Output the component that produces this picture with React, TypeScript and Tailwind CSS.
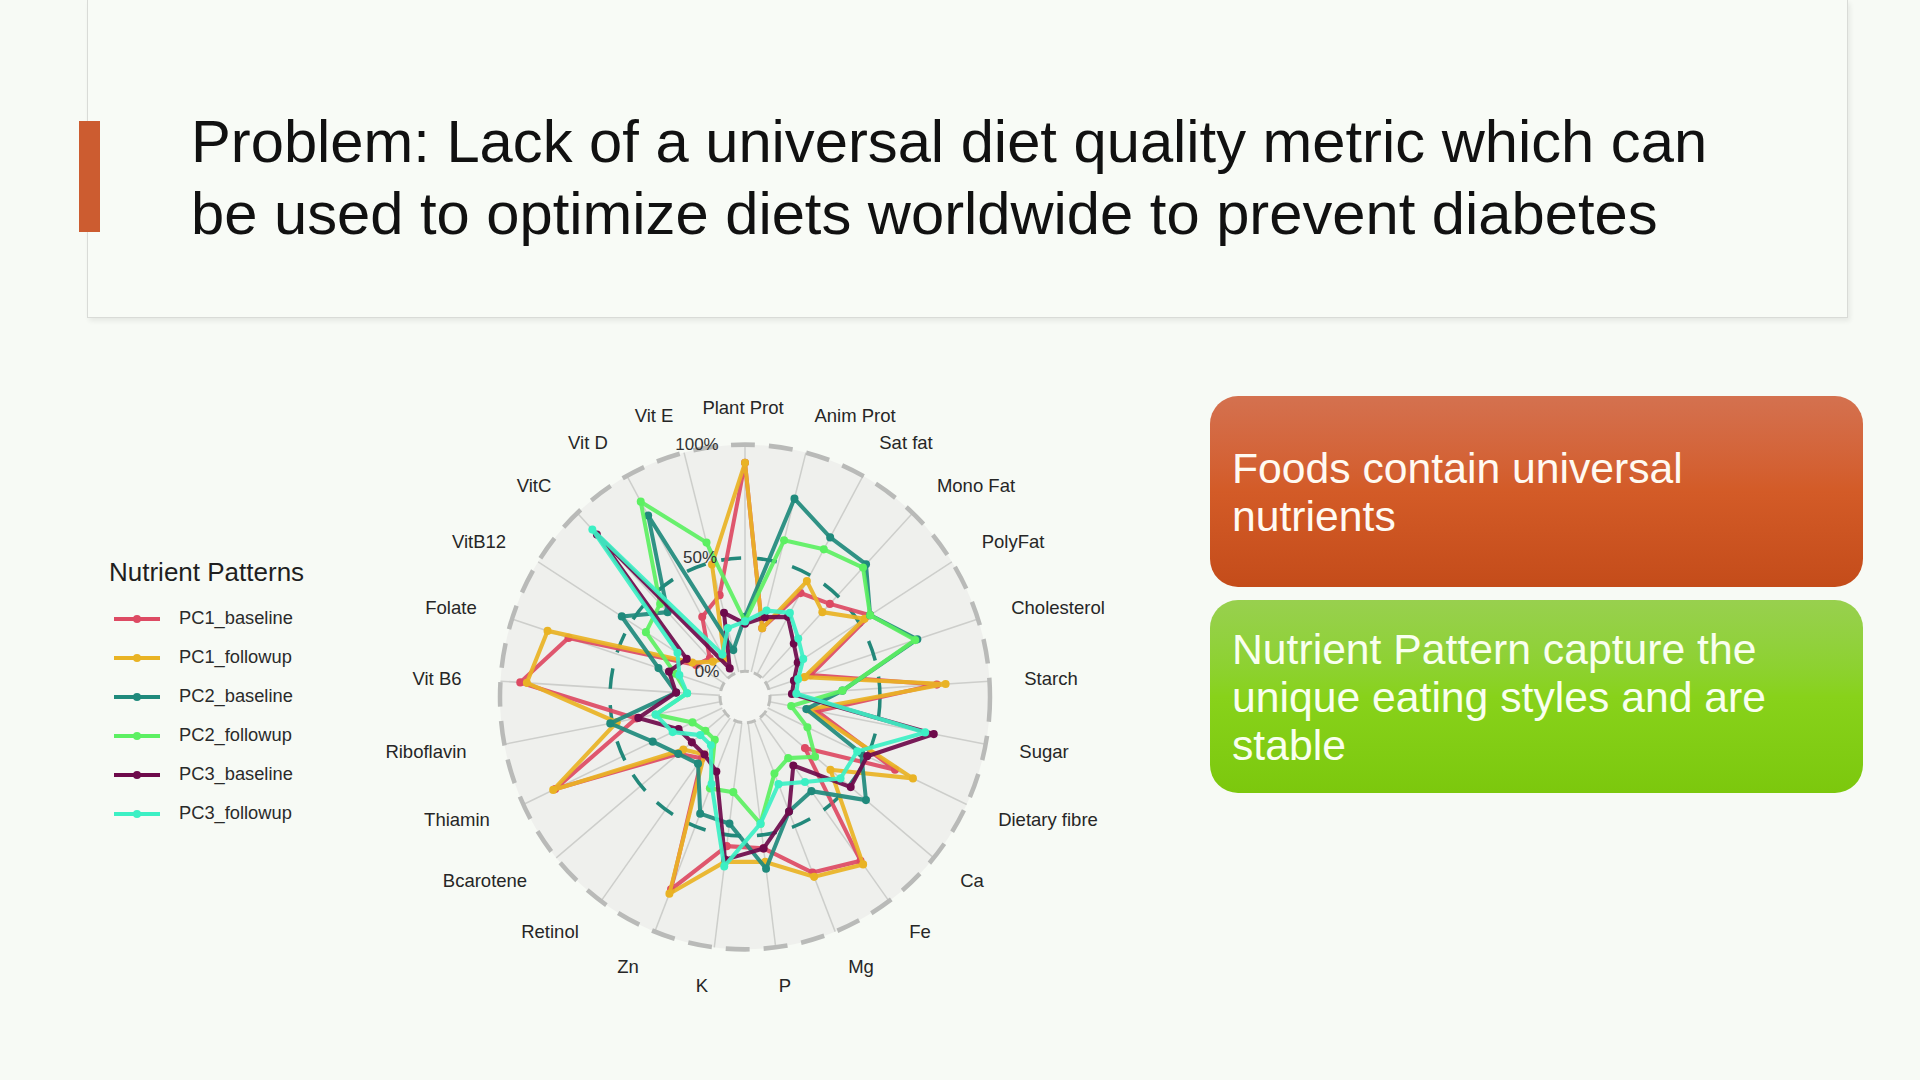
import React from 'react'

const AXES = [
    'Plant Prot', 'Anim Prot', 'Sat fat', 'Mono Fat', 'PolyFat', 'Cholesterol', 'Starch', 'Sugar',
    'Dietary fibre', 'Ca', 'Fe', 'Mg', 'P', 'K', 'Zn', 'Retinol', 'Bcarotene', 'Thiamin',
    'Riboflavin', 'Vit B6', 'Folate', 'VitB12', 'VitC', 'Vit D', 'Vit E',
]

// label centres inside the chart svg
const LABEL_POS: [number, number][] = [
    [363, 27], [475, 35], [526, 62], [596, 105], [633, 161], [678, 227], [671, 298], [664, 371],
    [668, 439], [592, 500], [540, 551], [481, 586], [405, 605], [322, 605], [248, 586], [170, 551],
    [105, 500], [77, 439], [46, 371], [57, 298], [71, 227], [99, 161], [154, 105], [208, 62], [274, 35],
]

const SERIES = [
    { name: 'PC1_baseline', color: '#dd4a63', values: [0.92, 0.2, 0.41, 0.45, 0.56, 0.2, 0.76, 0.22, 0.64, 0.24, 0.78, 0.72, 0.56, 0.55, 0.8, 0.22, 0.28, 0.84, 0.39, 0.91, 0.73, 0.15, 0.12, 0.29, 0.35] },
    { name: 'PC1_followup', color: '#e9b324', values: [0.92, 0.2, 0.47, 0.4, 0.53, 0.17, 0.8, 0.18, 0.73, 0.39, 0.8, 0.74, 0.62, 0.62, 0.82, 0.2, 0.25, 0.85, 0.48, 0.88, 0.83, 0.17, 0.1, 0.08, 0.49] },
    { name: 'PC2_baseline', color: '#1f8a7c', values: [0.24, 0.79, 0.69, 0.69, 0.56, 0.71, 0.33, 0.17, 0.47, 0.6, 0.4, 0.43, 0.65, 0.45, 0.44, 0.25, 0.28, 0.35, 0.51, 0.2, 0.3, 0.55, 0.4, 0.8, 0.1] },
    { name: 'PC2_followup', color: '#5cf062', values: [0.22, 0.6, 0.63, 0.67, 0.56, 0.7, 0.33, 0.1, 0.2, 0.3, 0.22, 0.25, 0.45, 0.31, 0.32, 0.12, 0.12, 0.15, 0.3, 0.15, 0.22, 0.42, 0.45, 0.87, 0.59] },
    { name: 'PC3_baseline', color: '#6e0a4b', values: [0.21, 0.25, 0.29, 0.21, 0.17, 0.12, 0.1, 0.76, 0.5, 0.51, 0.26, 0.43, 0.56, 0.61, 0.24, 0.2, 0.2, 0.22, 0.38, 0.2, 0.25, 0.2, 0.87, 0.03, 0.27] },
    { name: 'PC3_followup', color: '#3cf0c4', values: [0.22, 0.28, 0.31, 0.24, 0.2, 0.14, 0.12, 0.72, 0.45, 0.45, 0.35, 0.3, 0.45, 0.64, 0.3, 0.15, 0.15, 0.25, 0.3, 0.15, 0.2, 0.25, 0.9, 0.1, 0.2] },
]

const CX = 365
const CY = 317
const R0 = 25
const R = 245
const SY = 1.03

function pt(i: number, r: number): [number, number] {
    const a = (i * 2 * Math.PI) / AXES.length
    return [Math.sin(a) * r, -Math.cos(a) * r]
}

function RadarChart() {
    return (
        <svg width={740} height={630} viewBox="0 0 740 630" className="shrink-0">
            <g transform={`translate(${CX} ${CY}) scale(1 ${SY})`}>
                <circle r={R} fill="#eff0ed" />
                {AXES.map((_, i) => {
                    const [x1, y1] = pt(i, R0)
                    const [x2, y2] = pt(i, R)
                    return <line key={i} x1={x1} y1={y1} x2={x2} y2={y2} stroke="#cdcecb" strokeWidth={1.5} />
                })}
                <circle r={R} fill="none" stroke="#b9bab8" strokeWidth={4.5} strokeDasharray="24 14" />
                <circle r={R0 + (R - R0) * 0.5} fill="none" stroke="#22887a" strokeWidth={3.5} strokeDasharray="20 16" />
                <circle r={R0} fill="#f4f5f2" stroke="#bdbebb" strokeWidth={3} strokeDasharray="9 5" />
                {SERIES.map(s => {
                    const pts = s.values.map((v, i) => pt(i, R0 + v * (R - R0)))
                    const d = pts.map(p => `${p[0].toFixed(1)},${p[1].toFixed(1)}`).join(' ')
                    return (
                        <g key={s.name}>
                            <polygon points={d} fill="none" stroke={s.color} strokeWidth={4} strokeLinejoin="round" opacity={0.92} />
                            {pts.map((p, i) => (
                                <circle key={i} cx={p[0]} cy={p[1]} r={4} fill={s.color} />
                            ))}
                        </g>
                    )
                })}
            </g>
            <g fontFamily="'Liberation Sans', Arial, sans-serif" fontSize={17} fill="#333" textAnchor="middle" dominantBaseline="central">
                <text x={317} y={64}>100%</text>
                <text x={320} y={177}>50%</text>
                <text x={327} y={291}>0%</text>
            </g>
            <g fontFamily="'Liberation Sans', Arial, sans-serif" fontSize={18.5} fill="#262626" textAnchor="middle" dominantBaseline="central">
                {AXES.map((a, i) => (
                    <text key={a} x={LABEL_POS[i][0]} y={LABEL_POS[i][1]}>{a}</text>
                ))}
            </g>
        </svg>
    )
}

function Legend() {
    return (
        <div className="w-[293px] shrink-0 mt-[239px] pl-[27px] font-['Liberation_Sans',Arial,sans-serif] text-[#1f1f1f]">
            <p className="text-[26px] leading-[30px] -ml-[5px]">Nutrient Patterns</p>
            <div className="mt-[12px] flex flex-col">
                {SERIES.map(s => (
                    <div key={s.name} className="h-[39px] flex items-center gap-[19px]">
                        <svg width={46} height={12} viewBox="0 0 46 12">
                            <line x1={0} y1={6} x2={46} y2={6} stroke={s.color} strokeWidth={4} />
                            <circle cx={23} cy={6} r={4} fill={s.color} />
                        </svg>
                        <span className="text-[18.3px] leading-none text-[#2a2a2a]">{s.name}</span>
                    </div>
                ))}
            </div>
        </div>
    )
}

export default function App() {
    return (
        <div className="w-[1920px] h-[1080px] bg-[#f7faf5] overflow-hidden font-['Liberation_Sans',Arial,sans-serif]">
            <div className="relative ml-[87px] w-[1761px] h-[318px] bg-[#f8fbf6] border-x border-b border-[#d9dbd7] shadow-[2px_3px_5px_rgba(0,0,0,0.07)]">
                <div className="absolute left-[-9px] top-[121px] w-[21px] h-[111px] bg-[#cc5c30]" />
                <h1 className="pl-[103px] pt-[106px] text-[59.7px] leading-[72px] text-[#111] font-normal">
                    Problem: Lack of a universal diet quality metric which can
                    <br />
                    be used to optimize diets worldwide to prevent diabetes
                </h1>
            </div>

            <div className="flex items-start">
                <div className="ml-[87px] flex items-start">
                    <Legend />
                    <div className="mt-[62px]">
                        <RadarChart />
                    </div>
                </div>

                <div className="ml-[90px] mt-[78px] w-[653px] flex flex-col gap-[13px]">
                    <div className="h-[191px] rounded-[28px] bg-gradient-to-b from-[#d4714f] via-[#d35b27] to-[#c44c1a] flex items-center px-[22px]">
                        <p className="text-[42.7px] leading-[48px] text-[#fffaf2]">
                            Foods contain universal
                            <br />
                            nutrients
                        </p>
                    </div>
                    <div className="h-[193px] rounded-[28px] bg-gradient-to-b from-[#98d04e] via-[#88d21a] to-[#7cc80d] flex items-center px-[22px]">
                        <p className="text-[42.7px] leading-[48px] text-[#f9ffef]">
                            Nutrient Pattern capture the
                            <br />
                            unique eating styles and are
                            <br />
                            stable
                        </p>
                    </div>
                </div>
            </div>
        </div>
    )
}
